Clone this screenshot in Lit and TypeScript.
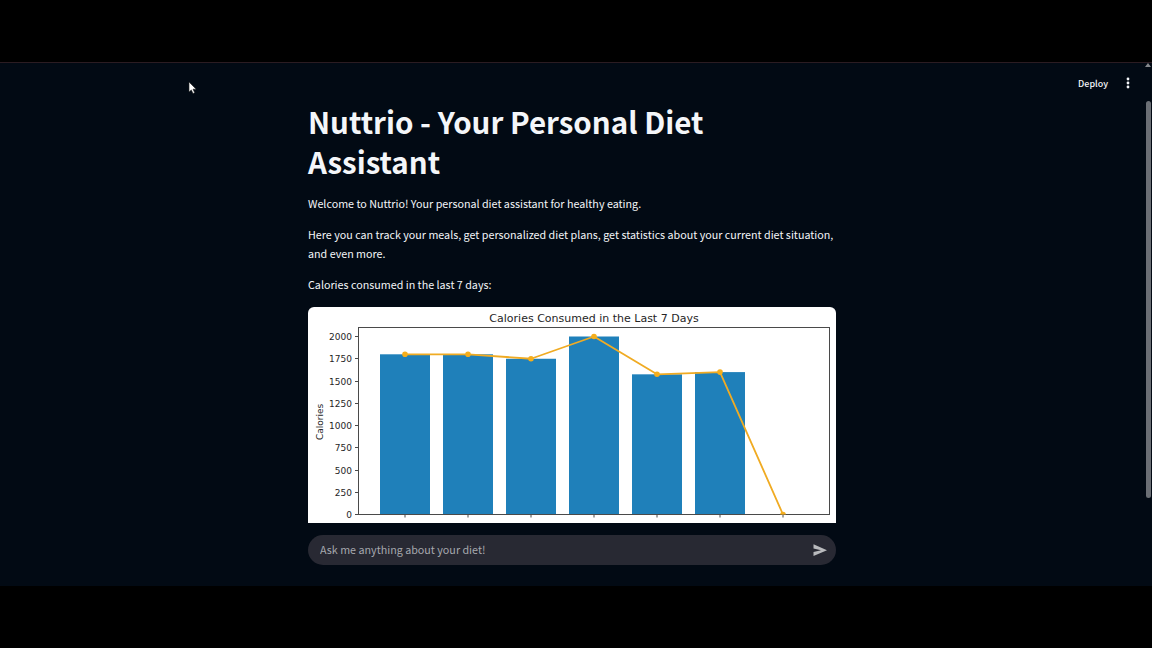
import { LitElement, html, css, svg } from "lit";
import { customElement, state } from "lit/decorators.js";

const CALORIES = [1800, 1800, 1750, 2000, 1575, 1600, 0];
const Y_TICKS = [0, 250, 500, 750, 1000, 1250, 1500, 1750, 2000];
const PLOT = { left: 50, right: 522, top: 20, bottom: 207 };
const FIRST_DAY = 97;
const DAY_STEP = 63;
const BAR_WIDTH = 50;

const xOf = (day: number) => FIRST_DAY + day * DAY_STEP;
const yOf = (kcal: number) => PLOT.bottom + 0.5 - kcal * 0.089;

@customElement("calorie-chart")
class CalorieChart extends LitElement {
  static styles = css`
    :host {
      display: block;
      background: #fff;
      border-radius: 6px 6px 0 0;
      overflow: hidden;
      font-size-adjust: none;
    }
    .chart {
      display: block;
      width: 100%;
    }
    .label {
      font-family: "DejaVu Sans", sans-serif;
      font-size: 9px;
      fill: #262626;
    }
    .title {
      font-size: 11px;
    }
    .middle {
      text-anchor: middle;
    }
    .end {
      text-anchor: end;
    }
    .bar {
      fill: #1f80ba;
    }
    .axis {
      fill: none;
      stroke: #4a4a4a;
      stroke-width: 1;
    }
    .trend {
      fill: none;
      stroke: #f0ab23;
      stroke-width: 1.8;
      stroke-linejoin: round;
    }
    .dot {
      fill: #f5ae1c;
    }
  `;

  render() {
    const { left, right, top, bottom } = PLOT;
    return html`
      <svg class="chart" viewBox="0 0 528 300" role="img" aria-label="Calories Consumed in the Last 7 Days">
        <defs>
          <clipPath id="plot">
            <rect x=${left} y=${top} width=${right - left} height=${bottom + 0.5 - top}></rect>
          </clipPath>
        </defs>
        <text class="label title middle" x="286" y="15">Calories Consumed in the Last 7 Days</text>
        <text class="label middle" transform="translate(15 115) rotate(-90)">Calories</text>
        ${CALORIES.map(
          (kcal, day) => svg`<rect class="bar" x=${xOf(day) - BAR_WIDTH / 2} y=${yOf(kcal)}
            width=${BAR_WIDTH} height=${yOf(0) - yOf(kcal)}></rect>`
        )}
        <rect class="axis" x=${left + 0.5} y=${top + 0.5} width=${right - left - 1} height=${bottom - top}></rect>
        ${Y_TICKS.map(
          (kcal) => svg`
            <path class="axis" d="M${left - 3} ${Math.floor(yOf(kcal)) + 0.5}h3"></path>
            <text class="label end" x=${left - 6} y=${Math.floor(yOf(kcal)) + 4}>${kcal}</text>`
        )}
        ${CALORIES.map((_, day) => svg`<path class="axis" d="M${xOf(day)} ${bottom + 0.5}v3"></path>`)}
        <g clip-path="url(#plot)">
          <polyline class="trend" points=${CALORIES.map((k, i) => `${xOf(i)},${yOf(k)}`).join(" ")}></polyline>
          ${CALORIES.map((k, i) => svg`<circle class="dot" cx=${xOf(i)} cy=${yOf(k)} r="2.8"></circle>`)}
        </g>
      </svg>
    `;
  }
}

@customElement("app-root")
class AppRoot extends LitElement {
  @state() private question = "";

  static styles = css`
    :host {
      display: flex;
      height: 100vh;
      box-sizing: border-box;
      padding: 62px 0;
      background: #000;
      color: #f4f6f9;
      font-family: "Noto Sans CJK JP", "Noto Sans", sans-serif;
      font-size: 12px;
      font-size-adjust: 0.486;
      line-height: 19px;
    }
    .app {
      position: relative;
      flex: 1;
      display: flex;
      min-width: 0;
      background: #020a14;
      border-top: 1px solid #2b1c22;
      box-sizing: border-box;
    }
    .page {
      flex: 1;
      min-width: 0;
      display: flex;
      flex-direction: column;
    }
    .toolbar {
      flex: none;
      height: 32px;
      box-sizing: border-box;
      display: flex;
      align-items: center;
      justify-content: flex-end;
      gap: 12px;
      padding: 8px 8px 0 0;
    }
    button {
      border: 0;
      padding: 0;
      background: none;
      color: inherit;
      font: inherit;
      font-size-adjust: inherit;
      cursor: pointer;
    }
    .deploy {
      font-size: 10px;
      font-weight: 500;
    }
    .icon {
      display: block;
    }
    .content {
      flex: 1;
      min-height: 0;
      overflow: hidden;
      padding-top: 7px;
    }
    .column {
      width: 100%;
      max-width: 528px;
      margin: 0 auto;
      box-sizing: border-box;
    }
    .stack {
      display: flex;
      flex-direction: column;
      gap: 12px;
    }
    h1 {
      margin: 0;
      font-size: 33px;
      line-height: 40px;
      font-weight: 700;
    }
    p {
      margin: 0;
    }
    .chart-block {
      margin: 0;
      padding-top: 1px;
    }
    .footer {
      flex: none;
      padding: 12px 0 21px;
    }
    .ask {
      display: flex;
      align-items: center;
      height: 30px;
      box-sizing: border-box;
      padding: 0 8px 0 12px;
      border-radius: 15px;
      background: #282933;
    }
    .question {
      flex: 1;
      min-width: 0;
      border: 0;
      padding: 0 0 2px;
      outline: 0;
      background: none;
      color: inherit;
      font: inherit;
      font-size-adjust: inherit;
    }
    .question::placeholder {
      color: #a6a8ae;
      opacity: 1;
    }
    .scrollbar {
      flex: none;
      width: 8px;
      display: flex;
      flex-direction: column;
      align-items: center;
      gap: 34px;
    }
    .thumb {
      width: 5px;
      height: 76%;
      border-radius: 3px;
      background: #6b6f75;
    }
    .pointer {
      position: absolute;
      left: 188px;
      top: 18px;
    }
  `;

  private onInput(event: Event) {
    this.question = (event.target as HTMLInputElement).value;
  }

  private onSubmit(event: Event) {
    event.preventDefault();
    this.question = "";
  }

  render() {
    return html`
      <div class="app">
        <div class="page">
          <header class="toolbar">
            <button class="deploy" type="button">Deploy</button>
            <button type="button" aria-label="Menu">
              <svg class="icon" width="16" height="16" viewBox="0 0 16 16" fill="currentColor">
                <circle cx="8" cy="4" r="1.4"></circle>
                <circle cx="8" cy="8" r="1.4"></circle>
                <circle cx="8" cy="12" r="1.4"></circle>
              </svg>
            </button>
          </header>
          <main class="content">
            <div class="column stack">
              <h1>Nuttrio - Your Personal Diet Assistant</h1>
              <p>Welcome to Nuttrio! Your personal diet assistant for healthy eating.</p>
              <p>
                Here you can track your meals, get personalized diet plans, get statistics about your current diet
                situation, and even more.
              </p>
              <p>Calories consumed in the last 7 days:</p>
              <figure class="chart-block"><calorie-chart></calorie-chart></figure>
            </div>
          </main>
          <footer class="footer">
            <form class="column ask" @submit=${this.onSubmit}>
              <input
                class="question"
                type="text"
                aria-label="Ask me anything about your diet!"
                placeholder="Ask me anything about your diet!"
                .value=${this.question}
                @input=${this.onInput}
              />
              <button type="submit" aria-label="Send">
                <svg class="icon" width="16" height="16" viewBox="0 0 16 16" fill="#b9babd">
                  <path d="M1.500 2.200 15 8.200 1.500 14V10L9 8.200 1.500 6.400Z"></path>
                </svg>
              </button>
            </form>
          </footer>
        </div>
        <div class="scrollbar" aria-hidden="true">
          <svg class="icon" width="6" height="4" viewBox="0 0 6 4" fill="#85888c"><path d="M0 4 3 0 6 4Z"></path></svg>
          <div class="thumb"></div>
        </div>
        <svg class="pointer" width="9" height="14" viewBox="0 0 9 14" aria-hidden="true">
          <path d="M1 1v10l2.300-2.100 1.700 3.600 1.700-.8-1.700-3.500h3.200Z" fill="#fff" stroke="#222" stroke-width=".6"></path>
        </svg>
      </div>
    `;
  }
}
